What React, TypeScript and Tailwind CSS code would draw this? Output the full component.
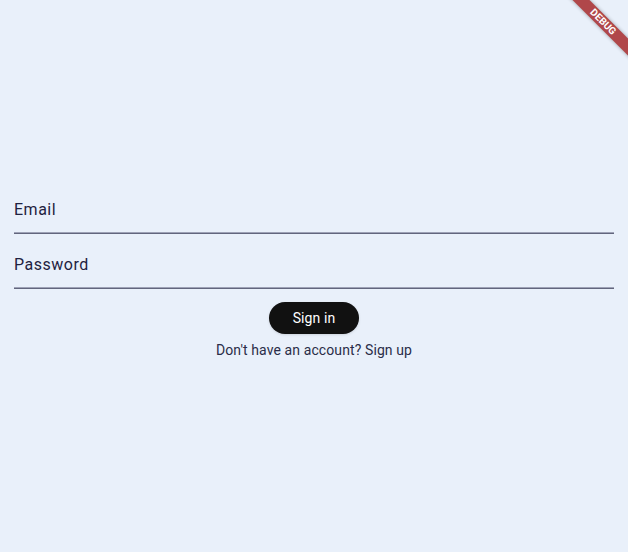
export default function App() {
  return (
    <main
      className="relative flex h-screen w-full flex-col justify-center overflow-hidden bg-[#e9f0fa] px-[14px] pb-[15px]"
      style={{ fontFamily: "Roboto, 'Liberation Sans', sans-serif" }}
    >
      {/* email */}
      <div className="flex flex-col pt-[20px]">
        <label className="h-[24px] text-[16px] leading-[24px] tracking-[0.5px] text-[#1f2240]">Email</label>
        <div className="mt-[10px] h-[2px] w-full border-t border-[#9ea2b6] bg-[#62667d]"></div>
      </div>

      {/* password */}
      <div className="flex flex-col pt-[19px]">
        <label className="h-[24px] text-[16px] leading-[24px] tracking-[0.5px] text-[#1f2240]">Password</label>
        <div className="mt-[10px] h-[2px] w-full border-t border-[#9ea2b6] bg-[#62667d]"></div>
      </div>

      <div className="mt-[13px] flex justify-center">
        <button className="h-[32px] rounded-full bg-[#111111] px-6 text-[14px] font-normal leading-[20px] tracking-[0.1px] text-white shadow-sm">
          Sign in
        </button>
      </div>

      <div className="mt-[6px] text-center text-[14px] leading-[20px] tracking-[0.1px] text-[#2a2d48]">
        Don&apos;t have an account? Sign up
      </div>

      {/* debug banner */}
      <div className="absolute left-[551px] top-[16px] flex h-[12px] w-[104px] rotate-45 items-center justify-center bg-[#b0474a] shadow-[0_0_4px_rgba(0,0,0,0.35)]">
        <span className="text-[10px] font-bold leading-[12px] text-white">DEBUG</span>
      </div>
    </main>
  );
}
